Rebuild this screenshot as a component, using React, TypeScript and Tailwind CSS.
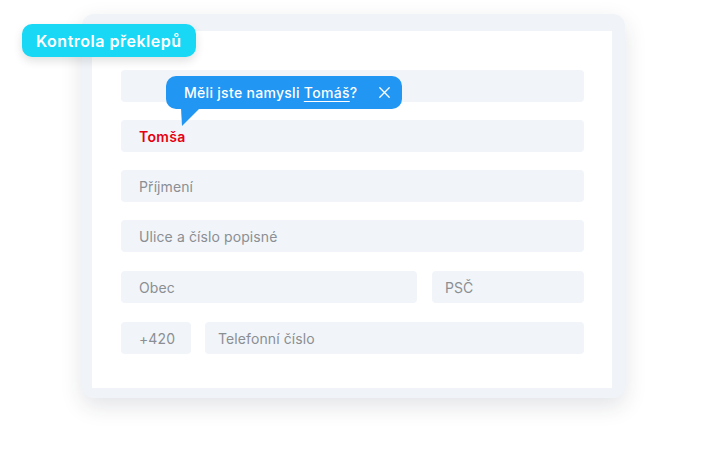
import React from "react";

const font = { fontFamily: "Inter, 'Noto Sans', sans-serif" };

function Field({ children, className = "", pl = "pl-[18px]" }: { children?: React.ReactNode; className?: string; pl?: string }) {
  return (
    <div className={`h-[32px] rounded-[4px] bg-[#f1f5f9] flex items-center ${pl} text-[14px] text-[#8b8e93] tracking-[0.1px] ${className}`}>
      {children}
    </div>
  );
}

export default function App() {
  return (
    <div className="relative w-[705px] h-[453px] bg-white overflow-hidden" style={font}>
      <div className="ml-[82px] mt-[14px] w-[543px] h-[384px] rounded-[12px] bg-[#f0f4f8] pt-[17px] pl-[10px] pr-[13px] pb-[10px] shadow-[0_8px_22px_rgba(30,40,60,0.13)]">
        <div className="bg-white h-full pl-[29px] pr-[28px] pt-[39px] flex flex-col gap-[18px]">
          <Field />
          <Field>
            <span className="text-[#e6000f] font-semibold tracking-[0.3px]">Tomša</span>
          </Field>
          <Field>Příjmení</Field>
          <Field>Ulice a číslo popisné</Field>
          <div className="flex gap-[15px] mt-[1px]">
            <Field className="w-[296px]">Obec</Field>
            <Field className="flex-1" pl="pl-[13px]">PSČ</Field>
          </div>
          <div className="flex gap-[14px] mt-[1px]">
            <Field className="w-[70px]">+420</Field>
            <Field className="flex-1" pl="pl-[13px]">Telefonní číslo</Field>
          </div>
        </div>
      </div>

      <div className="absolute left-[22px] top-[24px] w-[174px] h-[33px] rounded-[10px] bg-[#18d8f5] flex items-center pl-[14px] text-white text-[16px] font-semibold tracking-[0.5px] shadow-[0_4px_10px_rgba(0,0,0,0.12)]">
        Kontrola překlepů
      </div>

      <div className="absolute left-[166px] top-[76px] w-[236px] h-[33px] rounded-[10px] bg-[#2196f3] flex items-center pl-[18px] text-white text-[14px] font-medium tracking-[0.3px]">
        <span>
          Měli jste namysli <span className="underline underline-offset-[3px] decoration-[1px]">Tomáš</span>?
        </span>
        <svg className="absolute" style={{ left: 213, top: 11 }} width="11" height="11" viewBox="0 0 11 11">
          <path d="M0.8 0.8L10.2 10.2M10.2 0.8L0.8 10.2" stroke="white" strokeWidth="1.3" strokeLinecap="round" />
        </svg>
      </div>
      <svg className="absolute left-[181px] top-[108px]" width="20" height="19" viewBox="0 0 20 19">
        <path d="M0 0H19L1 18Z" fill="#2196f3" />
      </svg>
    </div>
  );
}
